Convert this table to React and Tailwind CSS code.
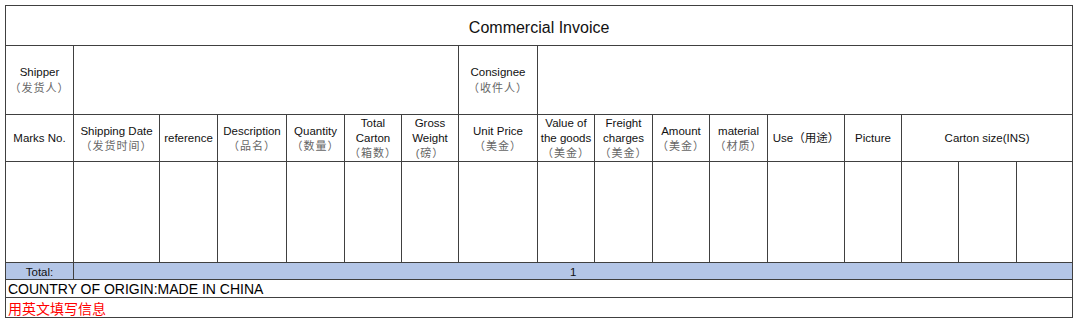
import React from 'react';

// column widths measured from the sheet, left to right
const COLS = [68, 86, 58, 69, 58, 57, 57, 79, 57, 58, 57, 58, 77, 57, 57, 58, 56];

const HEADERS = [
    ['Marks No.'],
    ['Shipping Date', '（发货时间）'],
    ['reference'],
    ['Description', '（品名）'],
    ['Quantity', '（数量）'],
    ['Total', 'Carton', '（箱数）'],
    ['Gross', 'Weight', '(磅）'],
    ['Unit Price', '（美金）'],
    ['Value of', 'the goods', '（美金）'],
    ['Freight', 'charges', '（美金）'],
    ['Amount', '（美金）'],
    ['material', '（材质）'],
    ['Use（用途）'],
    ['Picture'],
];

const cell = 'border border-[#404040] p-0 text-center align-middle';

function Lines({ lines }) {
    return (
        <div className="pt-[1px]">
            {lines.map((line, i) => {
                const cjk = /^[（(]/.test(line);
                return (
                    <div
                        key={i}
                        className={cjk ? 'text-[11px] tracking-[1px] text-[#666]' : 'text-[11.5px] text-[#111]'}
                    >
                        {line}
                    </div>
                );
            })}
        </div>
    );
}

export default function App() {
    return (
        <div className="bg-white pl-[5px] pt-[5px] h-[324px] w-[1080px] font-['Liberation_Sans','Noto_Sans_CJK_SC',sans-serif]">
            <table className="table-fixed border-collapse w-[1068px] leading-[15px] border border-[#555]">
                <colgroup>
                    {COLS.map((w, i) => (
                        <col key={i} style={{ width: w }} />
                    ))}
                </colgroup>
                <tbody>
                    <tr className="h-[40px]">
                        <td colSpan={17} className={`${cell} pt-[3px] text-[16px] text-[#111]`}>
                            Commercial Invoice
                        </td>
                    </tr>
                    <tr className="h-[69px]">
                        <td className={`${cell} leading-[15.5px]`}>
                            <Lines lines={['Shipper', '（发货人）']} />
                        </td>
                        <td colSpan={6} className={cell}></td>
                        <td className={`${cell} leading-[15.5px]`}>
                            <Lines lines={['Consignee', '（收件人）']} />
                        </td>
                        <td colSpan={9} className={cell}></td>
                    </tr>
                    <tr className="h-[47px]">
                        {HEADERS.map((h, i) => (
                            <td key={i} className={`${cell} whitespace-nowrap`}>
                                <Lines lines={h} />
                            </td>
                        ))}
                        <td colSpan={3} className={cell}>
                            <Lines lines={['Carton size(INS)']} />
                        </td>
                    </tr>
                    <tr className="h-[101px]">
                        {COLS.map((_, i) => (
                            <td key={i} className={cell}></td>
                        ))}
                    </tr>
                    <tr className="h-[17px] bg-[#b4c6e7]">
                        <td className={`${cell} pt-[1px] text-[11.5px] text-[#111] leading-[14px]`}>Total:</td>
                        <td colSpan={16} className={`${cell} pt-[1px] text-[11.5px] text-[#111] leading-[14px]`}>1</td>
                    </tr>
                    <tr className="h-[18px]">
                        <td colSpan={17} className={`${cell} text-left pl-[2px] pt-[1px] text-[14px] text-black leading-[15px]`}>
                            COUNTRY OF ORIGIN:MADE IN CHINA
                        </td>
                    </tr>
                    <tr className="h-[20px]">
                        <td colSpan={17} className={`${cell} text-left pl-[2px] text-[14px] text-[#ff0000] leading-[18px] font-['Noto_Sans_CJK_SC',sans-serif]`}>
                            用英文填写信息
                        </td>
                    </tr>
                </tbody>
            </table>
        </div>
    );
}
